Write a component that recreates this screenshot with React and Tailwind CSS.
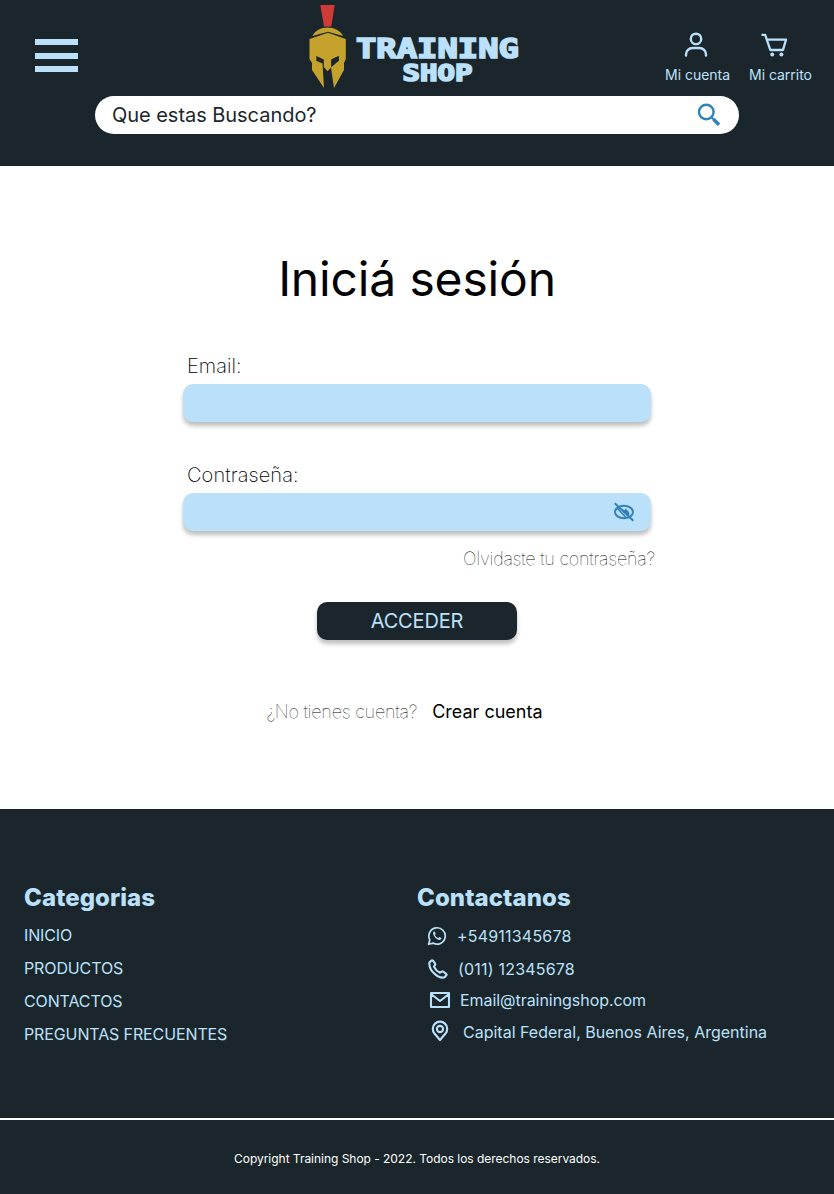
import React from "react";

function Logo() {
  return (
    <svg width="214" height="92" viewBox="306 0 214 92" role="img" aria-label="Training Shop">
      <path d="M320.3 5H334.7L331.3 26.5H324Z" fill="#cf3c37" />
      <path d="M312.5 36C315 30.500 321 27.500 327.500 27.500C334 27.500 340.500 30.500 343 36L328 31.700Z" fill="#c4a22c" />
      <path
        d="M309.500 39L328 32.700L345.800 39V59L344 63V70L334 88L331 67.500L338.800 60.800V56L331.500 59.500V67L327.500 71.300L323.800 67V59.500L316.300 56V60.800L322.500 63.500L324 88L312 70V63L309.500 59Z"
        fill="#c4a22c"
      />
      <path d="M338.800 56V60.800L332.800 63L331.200 68V59.500Z" fill="#1b262c" />
      <g
        fill="#bbe1fa"
        stroke="#bbe1fa"
        strokeWidth="1.700"
        strokeLinejoin="miter"
        fontFamily="'DejaVu Sans Mono', monospace"
        fontWeight="700"
      >
        <text x="356" y="58.300" fontSize="27" textLength="163" lengthAdjust="spacingAndGlyphs">TRAINING</text>
        <text x="402.500" y="81.300" fontSize="23" textLength="70" lengthAdjust="spacingAndGlyphs">SHOP</text>
      </g>
    </svg>
  );
}

function Header() {
  return (
    <header className="h-[166px] bg-[#1b262c]">
      <div className="flex h-24 items-start">
        <button aria-label="Menu" className="mt-[39px] ml-[35px] flex w-[43px] flex-col gap-[7.5px]">
          <span className="h-[6px] bg-[#bbe1fa]" />
          <span className="h-[6px] bg-[#bbe1fa]" />
          <span className="h-[6px] bg-[#bbe1fa]" />
        </button>
        <div className="ml-[228px]"><Logo /></div>
        <nav className="ml-[145px] flex gap-[19px] pt-[32px] text-[14px] leading-[18px] tracking-[-0.02px] text-[#bbe1fa]">
          <a className="flex w-[65px] flex-col items-center">
            <svg className="-ml-[3px]" width="26" height="26" viewBox="0 0 26 26" fill="none" stroke="currentColor" strokeWidth="2.4" strokeLinecap="round">
              <circle cx="13" cy="6.900" r="5.200" />
              <path d="M3 23.500V22.500A6.500 6.500 0 0 1 9.500 16H16.500A6.500 6.500 0 0 1 23 22.500V23.500" />
            </svg>
            <span className="mt-[8px] whitespace-nowrap">Mi cuenta</span>
          </a>
          <a className="flex w-[63px] flex-col items-center">
            <svg className="-ml-[13px]" width="28" height="26" viewBox="0 0 28 26" fill="none" stroke="currentColor" strokeWidth="2.300">
              <path d="M1.500 2.800H5.200L10.300 18H23L26 7.700H7" strokeLinejoin="round" />
              <circle cx="12.200" cy="22.500" r="2" fill="currentColor" stroke="none" />
              <circle cx="21.400" cy="22.500" r="2" fill="currentColor" stroke="none" />
            </svg>
            <span className="mt-[8px] whitespace-nowrap">Mi carrito</span>
          </a>
        </nav>
      </div>
      <div className="mx-[95px] flex h-[38px] items-center justify-between rounded-full bg-white pr-[18px] pl-[17px]">
        <span className="text-[20px] leading-6 tracking-[-0.04px] text-[#1b262c]">Que estas Buscando?</span>
        <svg width="24" height="24" viewBox="0 0 24 24" fill="none" stroke="#3282b8">
          <circle cx="9.300" cy="9" r="7.300" strokeWidth="2.400" />
          <path d="M14.500 14.200L17 16.700" strokeWidth="2" />
          <path d="M16.500 16.200L22 21.700" strokeWidth="3.600" />
        </svg>
      </div>
    </header>
  );
}

function HiddenEye() {
  return (
    <svg width="22" height="20" viewBox="0 0 22 20" fill="none" stroke="#3282b8" strokeWidth="2">
      <ellipse cx="11" cy="10" rx="9" ry="6.200" />
      <path d="M8 6.500L15.500 14.500C17 12 16.500 9.500 14.500 8.500L13 6.500L11.500 8Z" fill="#3282b8" stroke="none" />
      <path d="M4.500 6.500L12.500 15" strokeWidth="1.600" />
      <path d="M1.800 1.300L20.300 18.700" />
    </svg>
  );
}

function LoginForm() {
  return (
    <main className="flex h-[643px] flex-col items-center bg-white text-black">
      <h1 className="mt-[84px] text-[48px] leading-[58px] tracking-[-0.16px]">Iniciá sesión</h1>
      <div className="mt-[46px] w-[468px]">
        <label className="block h-[30px] pl-1 text-[20px] leading-6 font-extralight">Email:</label>
        <div className="h-[38px] rounded-[10px] bg-[#bbe1fa] shadow-[0_4px_4px_rgba(0,0,0,0.25)]" />
        <label className="mt-[41px] block h-[30px] pl-1 text-[20px] leading-6 font-extralight tracking-[0.1px]">Contraseña:</label>
        <div className="flex h-[38px] items-center justify-end rounded-[10px] bg-[#bbe1fa] pr-4 shadow-[0_4px_4px_rgba(0,0,0,0.25)]">
          <HiddenEye />
        </div>
        <a className="mt-[17px] -mr-1 block text-right text-[18px] leading-[22px] font-thin tracking-[-0.22px]">Olvidaste tu contraseña?</a>
      </div>
      <button className="mt-8 h-[38px] w-[200px] rounded-[10px] bg-[#1b262c] text-[20px] leading-6 tracking-[-0.15px] text-[#bbe1fa] shadow-[0_4px_4px_rgba(0,0,0,0.25)]">
        ACCEDER
      </button>
      <p className="mt-[61px] mr-[25px] flex gap-[15px] text-[18px] leading-[22px]">
        <span className="font-thin tracking-[-0.22px]">¿No tienes cuenta?</span>
        <a>Crear cuenta</a>
      </p>
    </main>
  );
}

function Footer() {
  return (
    <footer className="h-[385px] bg-[#1b262c] text-[#bbe1fa]">
      <div className="grid h-[309px] grid-cols-[393px_1fr] pt-[74px] pl-6">
        <section>
          <h2 className="text-[24px] leading-[30px] font-extrabold tracking-[0.08px]">Categorias</h2>
          <ul className="mt-[12px] flex flex-col gap-[13px] text-[16px] leading-5 tracking-[-0.12px]">
            <li>INICIO</li>
            <li>PRODUCTOS</li>
            <li>CONTACTOS</li>
            <li>PREGUNTAS FRECUENTES</li>
          </ul>
        </section>
        <section>
          <h2 className="text-[24px] leading-[30px] font-extrabold tracking-[0.08px]">Contactanos</h2>
          <ul className="mt-[13px] text-[16px] leading-5">
            <li className="flex h-[33px] gap-[10px] pl-[10px]">
              <svg width="20" height="20" viewBox="0 0 20 20" fill="none" stroke="currentColor" strokeWidth="1.700">
                <path d="M1.600 18.300L2.800 13.800A8.200 8.200 0 1 1 6 17.100Z" strokeLinejoin="round" />
                <path d="M7 5.600C5.700 6.500 5.800 8.200 7.400 10.500C9.500 13.500 12.400 15 14 13.300C14.500 12.700 14.500 12.100 14.300 11.900L12.300 11L11.200 12.200C9.800 11.700 8.500 10.400 7.900 9.100L8.700 8L7.900 5.800Z" fill="currentColor" stroke="none" />
              </svg>
              <span className="tracking-[0.2px]">+54911345678</span>
            </li>
            <li className="flex h-[31px] gap-[10px] pl-[11px]">
              <svg width="20" height="20" viewBox="0 0 20 20" fill="none" stroke="currentColor" strokeWidth="2.100" strokeLinejoin="round">
                <path d="M1.400 3.500L3.400 1.500Q4.200.9 5 1.700L7.100 4.700Q7.500 5.400 7 6.100L5.900 7.600C7 10 9.500 12.500 12 13.700L13.700 12.600Q14.500 12.100 15.200 12.700L18.200 14.900Q18.900 15.600 18.300 16.300L16.800 18C12 20.700 .5 12.500 1.400 3.500Z" />
              </svg>
              <span className="tracking-[0.2px]">(011) 12345678</span>
            </li>
            <li className="flex h-8 gap-[9px] pl-[12px]">
              <svg width="22" height="20" viewBox="0 0 22 20" fill="none" stroke="currentColor" strokeWidth="2.100" strokeLinejoin="round">
                <path d="M2 3H20V17H2ZM2 4L11 11L20 4" />
              </svg>
              <span className="tracking-[-0.05px]">Email@trainingshop.com</span>
            </li>
            <li className="flex gap-[13px] pl-[13px]">
              <svg className="-mt-[2px]" width="20" height="22" viewBox="0 0 20 22" fill="none" stroke="currentColor" strokeWidth="2.100">
                <path d="M15.500 13.500L10 20L4.500 13.500A7.200 7.200 0 1 1 15.500 13.500Z" strokeLinejoin="round" />
                <circle cx="10" cy="9" r="3.100" />
              </svg>
              <span>Capital Federal, Buenos Aires, Argentina</span>
            </li>
          </ul>
        </section>
      </div>
      <div className="flex h-[76px] items-center justify-center border-t-2 border-white pt-1 text-[12px] leading-4 tracking-[-0.03px] text-white">
        Copyright Training Shop - 2022. Todos los derechos reservados.
      </div>
    </footer>
  );
}

export default function App() {
  return (
    <div className="h-[1194px] w-[834px] overflow-hidden font-['Inter',sans-serif]">
      <Header />
      <LoginForm />
      <Footer />
    </div>
  );
}
